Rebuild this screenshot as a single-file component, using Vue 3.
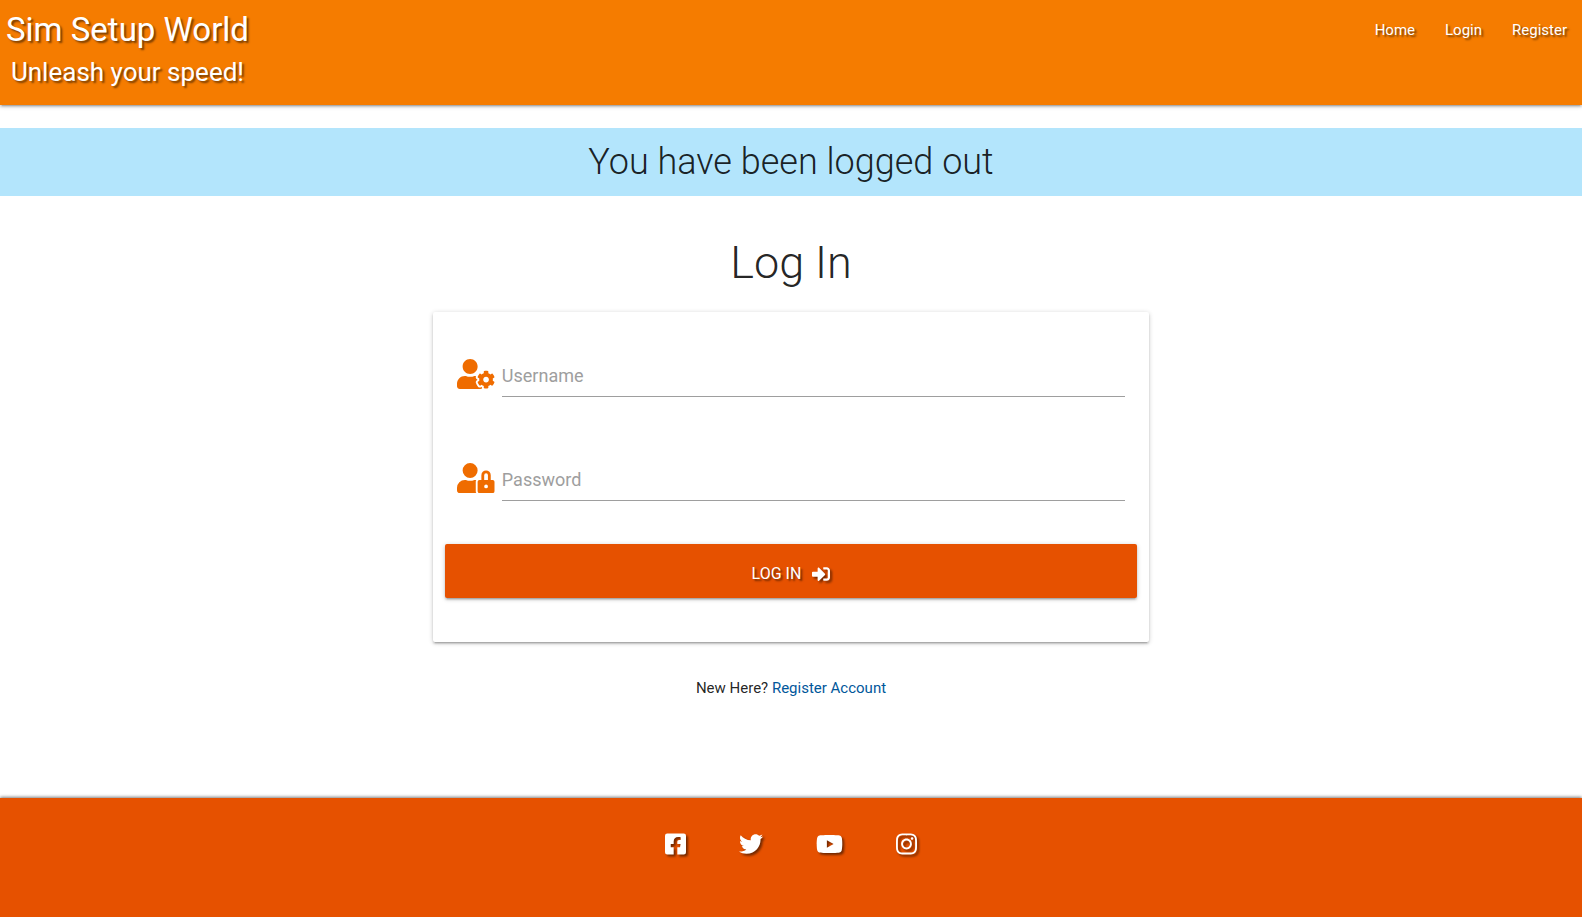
<script setup>
import { ref } from 'vue'

const username = ref('')
const password = ref('')

const navLinks = ['Home', 'Login', 'Register']

const socials = [
  {
    name: 'Facebook',
    box: '0 0 448 512',
    size: 'narrow',
    path: 'M400 32H48A48 48 0 0 0 0 80v352a48 48 0 0 0 48 48h137.25V327.69h-63V256h63v-54.64c0-62.15 37-96.48 93.67-96.48 27.14 0 55.52 4.84 55.52 4.84v61h-31.27c-30.81 0-40.42 19.12-40.42 38.73V256h68.78l-11 71.69h-57.78V480H400a48 48 0 0 0 48-48V80a48 48 0 0 0-48-48z'
  },
  {
    name: 'Twitter',
    box: '0 0 512 512',
    size: 'regular',
    path: 'M459.37 151.716c.325 4.548.325 9.097.325 13.645 0 138.72-105.583 298.558-298.558 298.558-59.452 0-114.68-17.219-161.137-47.106 8.447.974 16.568 1.299 25.34 1.299 49.055 0 94.213-16.568 130.274-44.832-46.132-.975-84.792-31.188-98.112-72.772 6.498.974 12.995 1.624 19.818 1.624 9.421 0 18.843-1.3 27.614-3.573-48.081-9.747-84.143-51.98-84.143-102.985v-1.299c13.969 7.797 30.214 12.67 47.431 13.319-28.264-18.843-46.781-51.005-46.781-87.391 0-19.492 5.197-37.36 14.294-52.954 51.655 63.675 129.3 105.258 216.365 109.807-1.624-7.797-2.599-15.918-2.599-24.04 0-57.828 46.782-104.934 104.934-104.934 30.213 0 57.502 12.67 76.67 33.137 23.715-4.548 46.456-13.32 66.599-25.34-7.798 24.366-24.366 44.833-46.132 57.827 21.117-2.273 41.584-8.122 60.426-16.243-14.292 20.791-32.161 39.308-52.628 54.253z'
  },
  {
    name: 'YouTube',
    box: '0 0 576 512',
    size: 'wide',
    path: 'M549.655 124.083c-6.281-23.65-24.787-42.276-48.284-48.597C458.781 64 288 64 288 64S117.22 64 74.629 75.486c-23.497 6.322-42.003 24.947-48.284 48.597-11.412 42.867-11.412 132.305-11.412 132.305s0 89.438 11.412 132.305c6.281 23.65 24.787 41.5 48.284 47.821C117.22 448 288 448 288 448s170.78 0 213.371-11.486c23.497-6.321 42.003-24.171 48.284-47.821 11.412-42.867 11.412-132.305 11.412-132.305s0-89.438-11.412-132.305zm-317.51 213.508V175.185l142.739 81.205-142.739 81.201z'
  },
  {
    name: 'Instagram',
    box: '0 0 448 512',
    size: 'narrow',
    path: 'M224.1 141c-63.6 0-114.9 51.3-114.9 114.9s51.3 114.9 114.9 114.9S339 319.5 339 255.9 287.7 141 224.1 141zm0 189.6c-41.1 0-74.7-33.5-74.7-74.7s33.5-74.7 74.7-74.7 74.7 33.5 74.7 74.7-33.6 74.7-74.7 74.7zm146.4-194.3c0 14.9-12 26.8-26.8 26.8-14.9 0-26.8-12-26.8-26.8s12-26.8 26.8-26.8 26.8 12 26.8 26.8zm76.1 27.2c-1.7-35.9-9.9-67.7-36.2-93.9-26.2-26.2-58-34.4-93.9-36.2-37-2.1-147.9-2.1-184.9 0-35.8 1.7-67.6 9.9-93.9 36.1s-34.4 58-36.2 93.9c-2.1 37-2.1 147.9 0 184.9 1.7 35.9 9.9 67.7 36.2 93.9s58 34.4 93.9 36.2c37 2.1 147.9 2.1 184.9 0 35.9-1.7 67.7-9.9 93.9-36.2 26.2-26.2 34.4-58 36.2-93.9 2.1-37 2.1-147.8 0-184.8zM398.8 388c-7.8 19.6-22.9 34.7-42.6 42.6-29.5 11.7-99.5 9-132.1 9s-102.7 2.6-132.1-9c-19.6-7.8-34.7-22.9-42.6-42.6-11.7-29.5-9-99.5-9-132.1s-2.6-102.7 9-132.1c7.8-19.6 22.9-34.7 42.6-42.6 29.5-11.7 99.5-9 132.1-9s102.7-2.6 132.1 9c19.6 7.8 34.7 22.9 42.6 42.6 11.7 29.5 9 99.5 9 132.1s2.7 102.7-9 132.1z'
  }
]
</script>

<template>
  <div class="page">
    <header class="header">
      <div class="brand">
        <a class="brand-name" href="#">Sim Setup World</a>
        <p class="tagline">Unleash your speed!</p>
      </div>
      <nav class="nav" aria-label="Main">
        <a v-for="link in navLinks" :key="link" href="#">{{ link }}</a>
      </nav>
    </header>

    <main class="main">
      <p class="flash" role="status">You have been logged out</p>
      <h1 class="title">Log In</h1>

      <form class="card" @submit.prevent>
        <div class="field">
          <svg class="field-icon" viewBox="0 0 640 512" preserveAspectRatio="xMinYMid meet" aria-hidden="true">
            <path d="M610.5 373.3c2.6-14.1 2.6-28.5 0-42.6l25.8-14.9c3-1.7 4.3-5.2 3.3-8.5-6.7-21.6-18.2-41.2-33.2-57.4-2.3-2.5-6-3.1-9-1.4l-25.8 14.9c-10.9-9.3-23.4-16.5-36.9-21.3v-29.8c0-3.4-2.4-6.4-5.7-7.1-22.3-5-45-4.8-66.2 0-3.3.7-5.7 3.7-5.7 7.1v29.8c-13.5 4.8-26 12-36.9 21.3l-25.8-14.9c-2.9-1.7-6.7-1.1-9 1.4-15 16.2-26.5 35.8-33.2 57.4-1 3.3.4 6.8 3.3 8.5l25.8 14.9c-2.6 14.1-2.6 28.5 0 42.6l-25.8 14.9c-3 1.7-4.3 5.2-3.3 8.5 6.7 21.6 18.2 41.1 33.2 57.4 2.3 2.5 6 3.1 9 1.4l25.8-14.9c10.9 9.3 23.4 16.5 36.9 21.3v29.8c0 3.4 2.4 6.4 5.7 7.1 22.3 5 45 4.8 66.2 0 3.3-.7 5.7-3.7 5.7-7.1v-29.8c13.5-4.8 26-12 36.9-21.3l25.8 14.9c2.9 1.7 6.7 1.1 9-1.4 15-16.2 26.5-35.8 33.2-57.4 1-3.3-.4-6.8-3.3-8.5l-25.8-14.9zM496 400.5c-26.8 0-48.5-21.8-48.5-48.5s21.8-48.5 48.5-48.5 48.5 21.8 48.5 48.5-21.7 48.5-48.5 48.5zM224 256c70.7 0 128-57.3 128-128S294.7 0 224 0 96 57.3 96 128s57.3 128 128 128zm201.2 226.5c-2.3-1.2-4.6-2.6-6.8-3.9l-7.9 4.6c-6 3.4-12.8 5.3-19.6 5.3-10.9 0-21.4-4.6-28.9-12.6-18.3-19.8-32.3-43.9-40.2-69.6-5.5-17.7 1.9-36.4 17.9-45.7l7.9-4.6c-.1-2.6-.1-5.2 0-7.8l-7.9-4.6c-16-9.2-23.4-28-17.9-45.7.9-2.9 2.2-5.8 3.2-8.7-3.8-.3-7.5-1.2-11.4-1.2h-16.7c-22.2 10.2-46.9 16-72.9 16s-50.6-5.8-72.9-16h-16.7C60.2 288 0 348.2 0 422.4V464c0 26.5 21.5 48 48 48h352c10.1 0 19.5-3.2 27.2-8.5-1.2-3.8-2-7.7-2-11.8v-9.2z" />
          </svg>
          <input v-model="username" type="text" placeholder="Username" aria-label="Username" autocomplete="username">
        </div>

        <div class="field">
          <svg class="field-icon" viewBox="0 0 640 512" preserveAspectRatio="xMinYMid meet" aria-hidden="true">
            <path d="M224 256A128 128 0 1 0 96 128a128 128 0 0 0 128 128zm96 64a63.08 63.08 0 0 1 8.1-30.5c-4.8-.5-9.5-1.5-14.5-1.5h-16.7a174.08 174.08 0 0 1-145.8 0h-16.7A134.43 134.43 0 0 0 0 422.4V464a48 48 0 0 0 48 48h280.9a63.54 63.54 0 0 1-8.9-32zm288-32h-32v-80a80 80 0 0 0-160 0v80h-32a32 32 0 0 0-32 32v160a32 32 0 0 0 32 32h224a32 32 0 0 0 32-32V320a32 32 0 0 0-32-32zM496 432a32 32 0 1 1 32-32 32 32 0 0 1-32 32zm32-144h-64v-80a32 32 0 0 1 64 0z" />
          </svg>
          <input v-model="password" type="password" placeholder="Password" aria-label="Password" autocomplete="current-password">
        </div>

        <button class="submit" type="submit">
          <span>LOG IN</span>
          <svg viewBox="0 0 512 512" aria-hidden="true">
            <path d="M416 448h-84c-6.6 0-12-5.4-12-12v-40c0-6.6 5.4-12 12-12h84c17.7 0 32-14.3 32-32V160c0-17.7-14.3-32-32-32h-84c-6.6 0-12-5.4-12-12V76c0-6.6 5.4-12 12-12h84c53 0 96 43 96 96v192c0 53-43 96-96 96zm-47-201L201 79c-15-15-41-4.5-41 17v96H24c-13.3 0-24 10.7-24 24v96c0 13.3 10.7 24 24 24h136v96c0 21.5 26 32 41 17l168-168c9.3-9.4 9.3-24.6 0-34z" />
          </svg>
        </button>
      </form>

      <p class="register">New Here? <a href="#">Register Account</a></p>
    </main>

    <footer class="footer">
      <a v-for="item in socials" :key="item.name" href="#" :aria-label="item.name">
        <svg :class="item.size" :viewBox="item.box" aria-hidden="true"><path :d="item.path" /></svg>
      </a>
    </footer>
  </div>
</template>

<style>
body {
  margin: 0;
  background: #fff;
}
</style>

<style scoped>
.page {
  display: flex;
  flex-direction: column;
  min-height: 100vh;
  font-family: Roboto, "Open Sans", sans-serif;
  font-size: 15px;
  font-weight: 300;
  line-height: 24px;
  color: rgba(0, 0, 0, 0.87);
}

a {
  text-decoration: none;
}

p,
h1 {
  margin: 0;
}

.header {
  display: flex;
  justify-content: space-between;
  align-items: flex-start;
  padding-bottom: 21px;
  background: #f57c00;
  color: #fff;
  font-weight: 400;
  text-shadow: 2px 2px 2px rgba(0, 0, 0, 0.5);
  box-shadow: 0 2px 2px 0 rgba(0, 0, 0, 0.14), 0 3px 1px -2px rgba(0, 0, 0, 0.12), 0 1px 5px 0 rgba(0, 0, 0, 0.2);
}

.brand {
  padding-left: 6px;
  text-align: center;
}

.brand-name {
  display: block;
  font-size: 33px;
  line-height: 60px;
  color: inherit;
}

.tagline {
  font-size: 26px;
  line-height: 24px;
}

.nav {
  display: flex;
}

.nav a {
  padding: 0 15px;
  line-height: 60px;
  color: inherit;
}

.main {
  display: flex;
  flex-direction: column;
  align-items: center;
  flex: 1;
  padding: 23px 0 40px;
}

.flash {
  align-self: stretch;
  background: #b3e5fc;
  font-size: 36px;
  line-height: 68px;
  text-align: center;
}

.title {
  padding: 38px 0 20px;
  font-size: 45px;
  font-weight: 300;
  line-height: 58px;
}

.card {
  box-sizing: border-box;
  width: calc(70% * 2 / 3 - 22px);
  padding: 40px 12px 44px;
  border-radius: 2px;
  background: #fff;
  box-shadow: 0 2px 2px 0 rgba(0, 0, 0, 0.14), 0 3px 1px -2px rgba(0, 0, 0, 0.12), 0 1px 5px 0 rgba(0, 0, 0, 0.2);
}

.field {
  display: flex;
  gap: 7px;
  margin: 0 12px 59px;
}

.field-icon {
  width: 38px;
  height: 30px;
  margin-top: 7px;
  fill: #ef6c00;
}

.field input {
  flex: 1;
  min-width: 0;
  height: 45px;
  box-sizing: border-box;
  padding: 3px 0 0;
  border: 0;
  border-bottom: 1px solid #9e9e9e;
  border-radius: 0;
  outline: 0;
  background: transparent;
  font: inherit;
  font-size: 18px;
  font-weight: 400;
}

.field input::placeholder {
  color: #9e9e9e;
  opacity: 1;
}

.field + .submit {
  margin-top: -16px;
}

.submit {
  display: flex;
  justify-content: center;
  align-items: center;
  gap: 11px;
  width: 100%;
  height: 54px;
  padding: 6px 0 0;
  border: 0;
  border-radius: 2px;
  background: #e65100;
  color: #fff;
  font: inherit;
  font-size: 16px;
  font-weight: 400;
  text-shadow: 2px 2px 2px rgba(0, 0, 0, 0.5);
  box-shadow: 0 2px 2px 0 rgba(0, 0, 0, 0.14), 0 3px 1px -2px rgba(0, 0, 0, 0.12), 0 1px 5px 0 rgba(0, 0, 0, 0.2);
}

.submit svg {
  width: 18px;
  height: 18px;
  fill: currentColor;
  filter: drop-shadow(2px 2px 1px rgba(0, 0, 0, 0.5));
}

.register {
  padding-top: 34px;
  font-weight: 400;
}

.register a {
  color: #01579b;
}

.footer {
  display: flex;
  justify-content: center;
  gap: 53px;
  padding: 34px 0 61px;
  background: #e65100;
  box-shadow: 0 -1px 3px rgba(0, 0, 0, 0.5);
}

.footer a {
  display: flex;
}

.footer svg {
  height: 24px;
  fill: #fff;
  filter: drop-shadow(2px 2px 1px rgba(0, 0, 0, 0.5));
}

.footer .narrow {
  width: 21px;
}

.footer .regular {
  width: 24px;
}

.footer .wide {
  width: 27px;
}
</style>
